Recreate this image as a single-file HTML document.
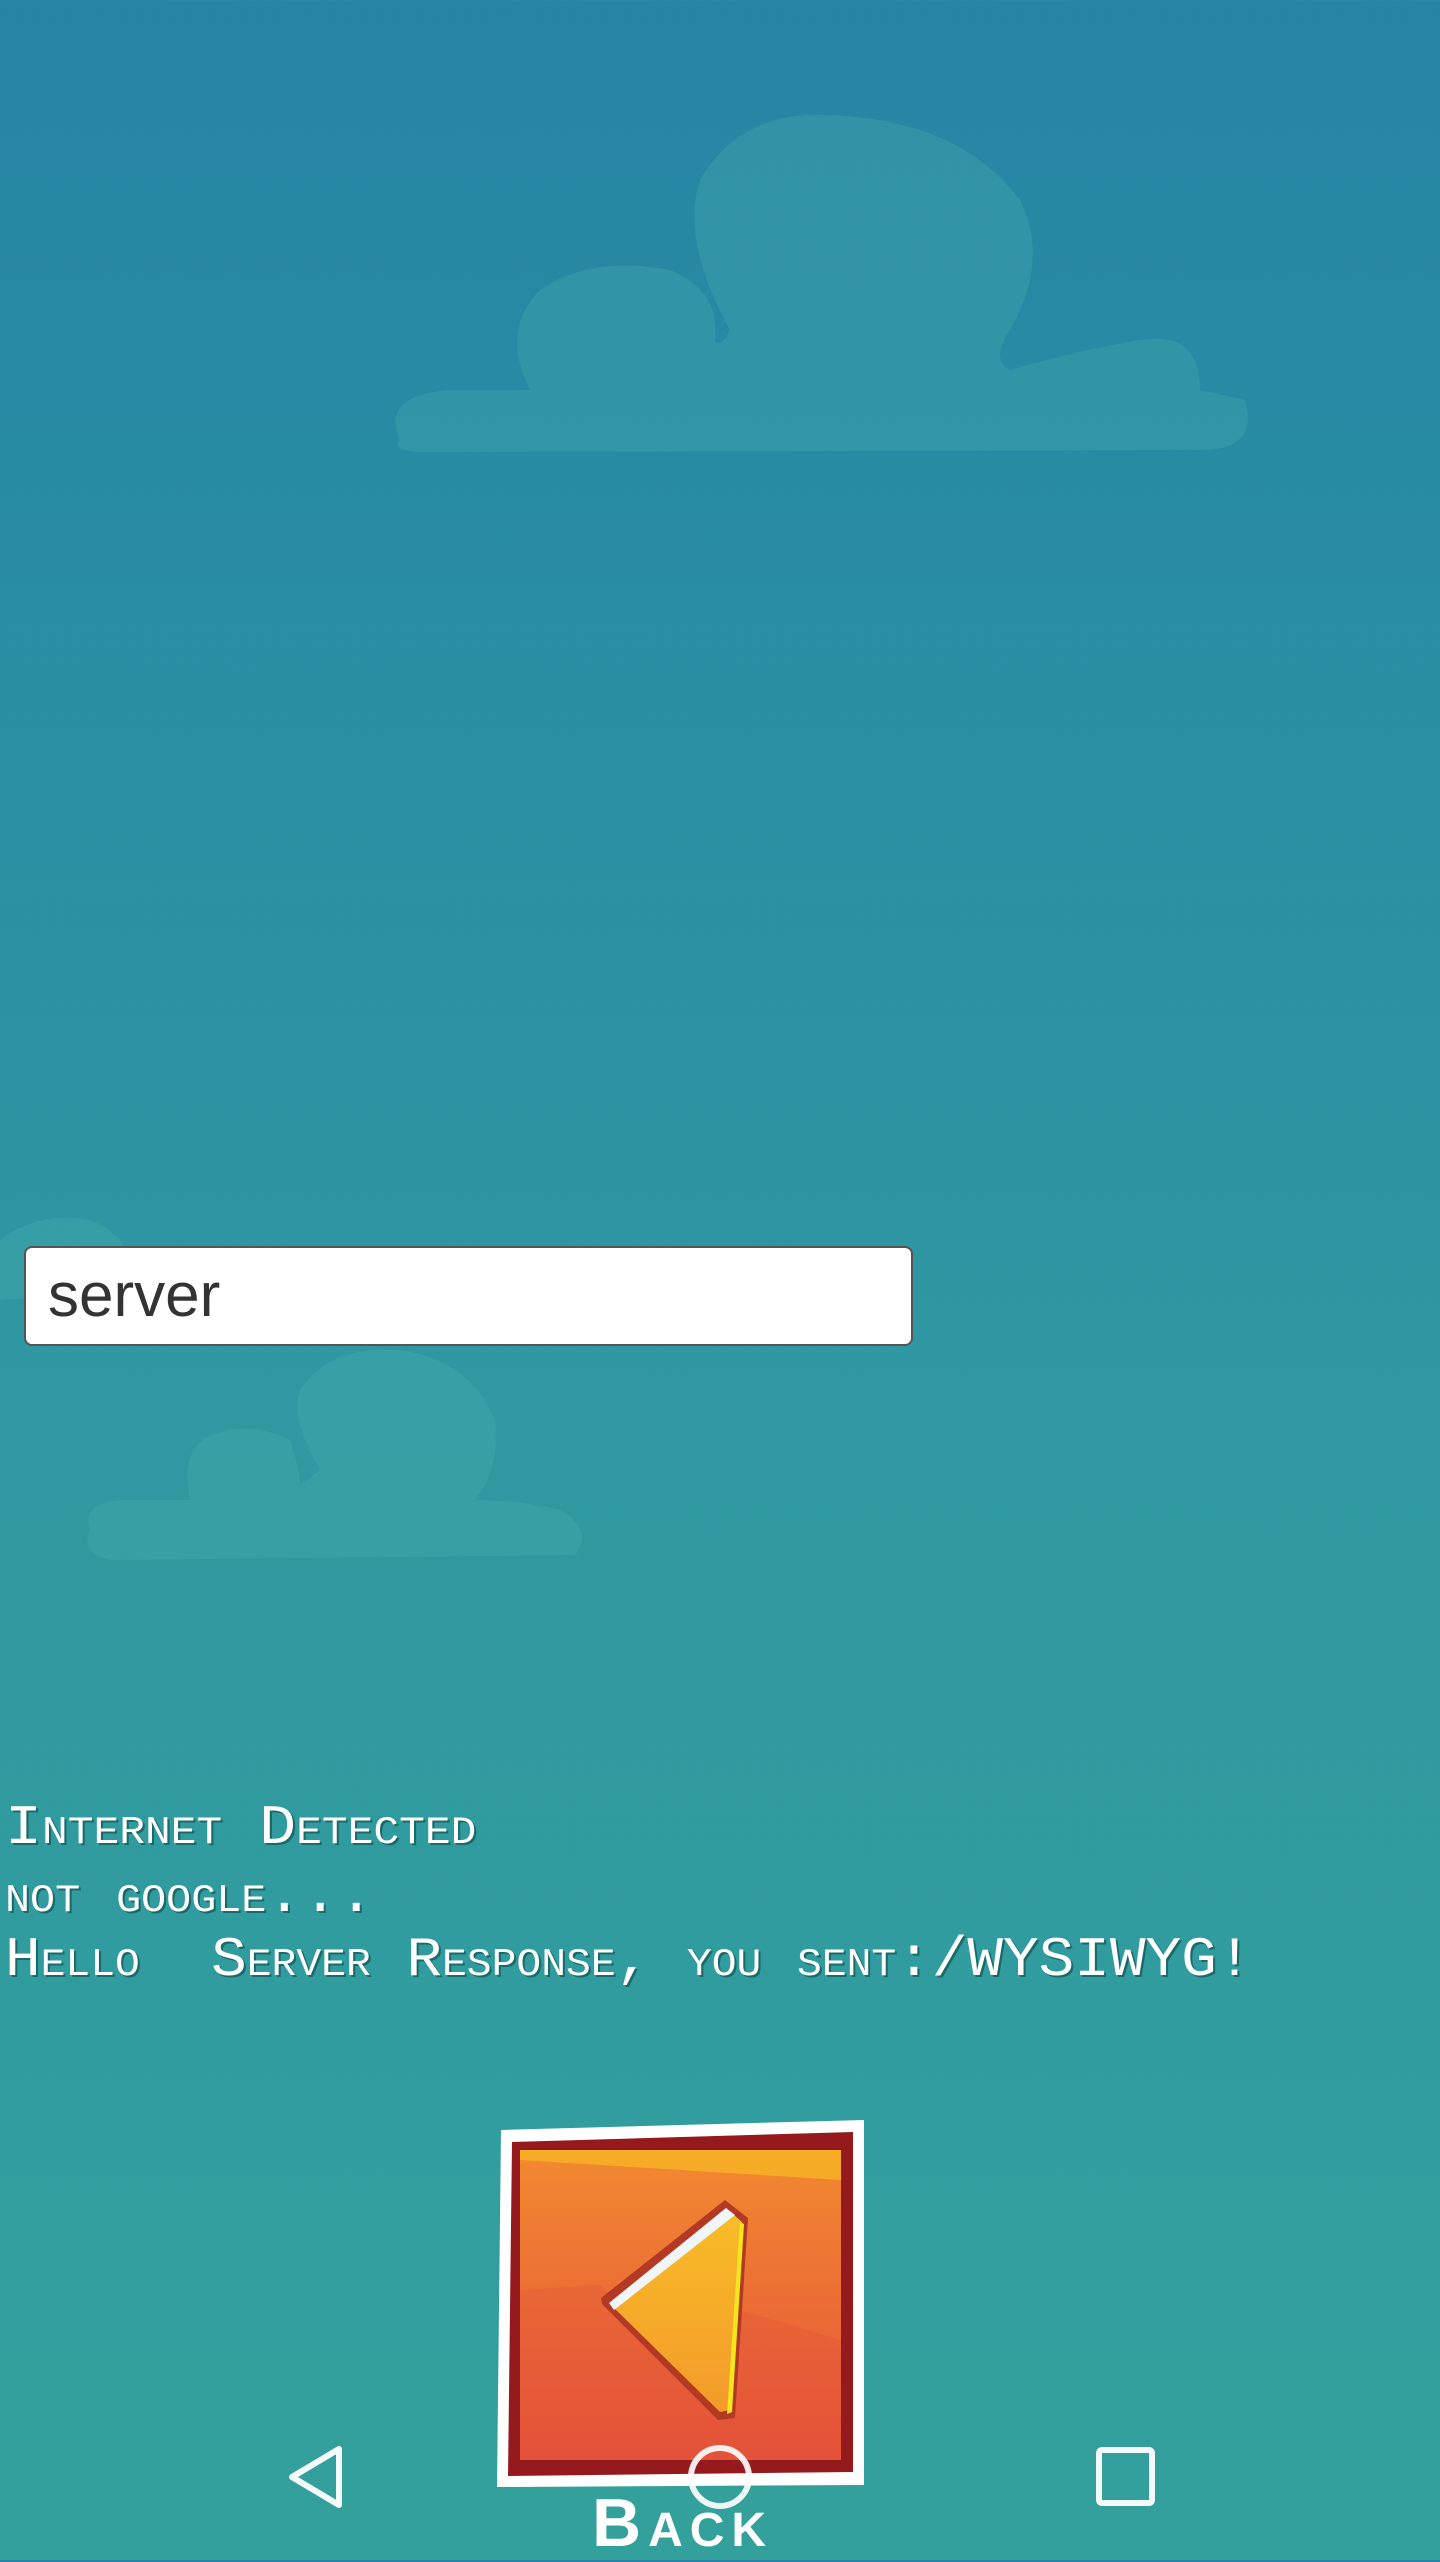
<!DOCTYPE html>
<html><head><meta charset="utf-8"><style>
html,body{margin:0;padding:0}
body{width:1440px;height:2560px;position:relative;overflow:hidden;background:linear-gradient(180deg,#2685a4 0%,#2a8fa3 30%,#2f98a1 55%,#33a09c 100%);font-family:"Liberation Sans",sans-serif}
.abs{position:absolute}
.input{left:24px;top:1246px;width:889px;height:100px;background:#fff;border:2px solid #555;border-radius:8px;box-sizing:border-box}
.input span{position:absolute;left:22px;top:12px;font-size:62px;color:#333}
.line{position:absolute;left:5px;font-family:"Liberation Mono",monospace;font-variant:small-caps;color:#fff;font-size:56px;transform-origin:0 0;white-space:pre;text-shadow:2px 2px 0 #1b6a6a;line-height:1}
.back{left:592px;top:2484px;font-size:68px;font-weight:bold;color:#fff;font-variant:small-caps;letter-spacing:7px}
</style></head><body>
<svg class="abs" style="left:0;top:0" width="1440" height="2560">
<g fill="#4fb3b0" opacity="0.28">
<path d="M400 440 Q380 395 450 390 L530 390 Q500 330 540 290 Q590 255 670 270 Q720 290 715 340 Q720 350 730 330 Q680 240 700 180 Q740 110 830 115 Q960 120 1020 200 Q1050 260 1010 330 Q990 360 1010 370 Q1080 350 1140 340 Q1200 330 1200 390 L1245 400 Q1260 450 1200 450 L420 452 Q390 450 400 440Z"/>
<path d="M90 1530 Q80 1500 130 1500 L190 1500 Q180 1450 210 1435 Q250 1420 290 1440 Q300 1470 300 1485 L320 1470 Q290 1420 300 1390 Q330 1345 400 1350 Q470 1360 495 1420 Q500 1470 475 1500 Q520 1500 560 1510 Q595 1530 575 1555 L110 1560 Q80 1555 90 1530Z"/>
<path d="M0 1240 Q40 1210 90 1220 Q140 1240 130 1290 L0 1300Z"/>
</g>
</svg>
<div class="abs input"><span>server</span></div>
<div class="line" style="top:1800px;transform:scaleX(1.1)">Internet Detected</div>
<div class="line" style="top:1868px;transform:scaleX(1.07)">not google...</div>
<div class="line" style="top:1932px;transform:scaleX(1.06)">Hello  Server Response, you sent:/WYSIWYG!</div>
<svg class="abs" style="left:0;top:0" width="1440" height="2560">
<defs><linearGradient id="g" x1="0" y1="0" x2="0" y2="1"><stop offset="0" stop-color="#f28a30"/><stop offset="1" stop-color="#e5503a"/></linearGradient>
<linearGradient id="t" x1="0" y1="0" x2="0" y2="1"><stop offset="0" stop-color="#f8bd28"/><stop offset="1" stop-color="#f49a2a"/></linearGradient></defs>
<polygon points="501,2130 864,2120 864,2485 497,2487" fill="#fff"/>
<polygon points="512,2142 853,2132 853,2472 508,2476" fill="#951a1e"/>
<polygon points="520,2150 841,2150 841,2460 520,2460" fill="url(#g)"/>
<polygon points="520,2150 841,2150 841,2180 520,2160" fill="#f8b424" opacity="0.8"/>
<polygon points="520,2290 600,2285 660,2340 740,2310 841,2340 841,2460 520,2460" fill="#e2553a" opacity="0.35"/>
<polygon points="725,2200 748,2218 735,2418 718,2420 602,2304 601,2298" fill="#b23a24"/>
<polygon points="726,2208 742,2222 730,2410 720,2412 610,2304" fill="url(#t)"/>
<polygon points="726,2208 735,2215 614,2310 609,2303" fill="#f0f6f8"/>
<polygon points="740,2222 744,2224 732,2412 727,2414" fill="#f4e61c"/>
<path d="M292 2477 L339 2449 L339 2505 Z" fill="none" stroke="#fff" stroke-width="6" stroke-linejoin="round" opacity="0.95"/>
<circle cx="720" cy="2477" r="29" fill="none" stroke="#fff" stroke-width="6" opacity="0.9"/>
<rect x="1099" y="2450" width="53" height="53" rx="3" fill="none" stroke="#fff" stroke-width="6" opacity="0.95"/>
</svg>
<div class="abs back">Back</div>
</body></html>
